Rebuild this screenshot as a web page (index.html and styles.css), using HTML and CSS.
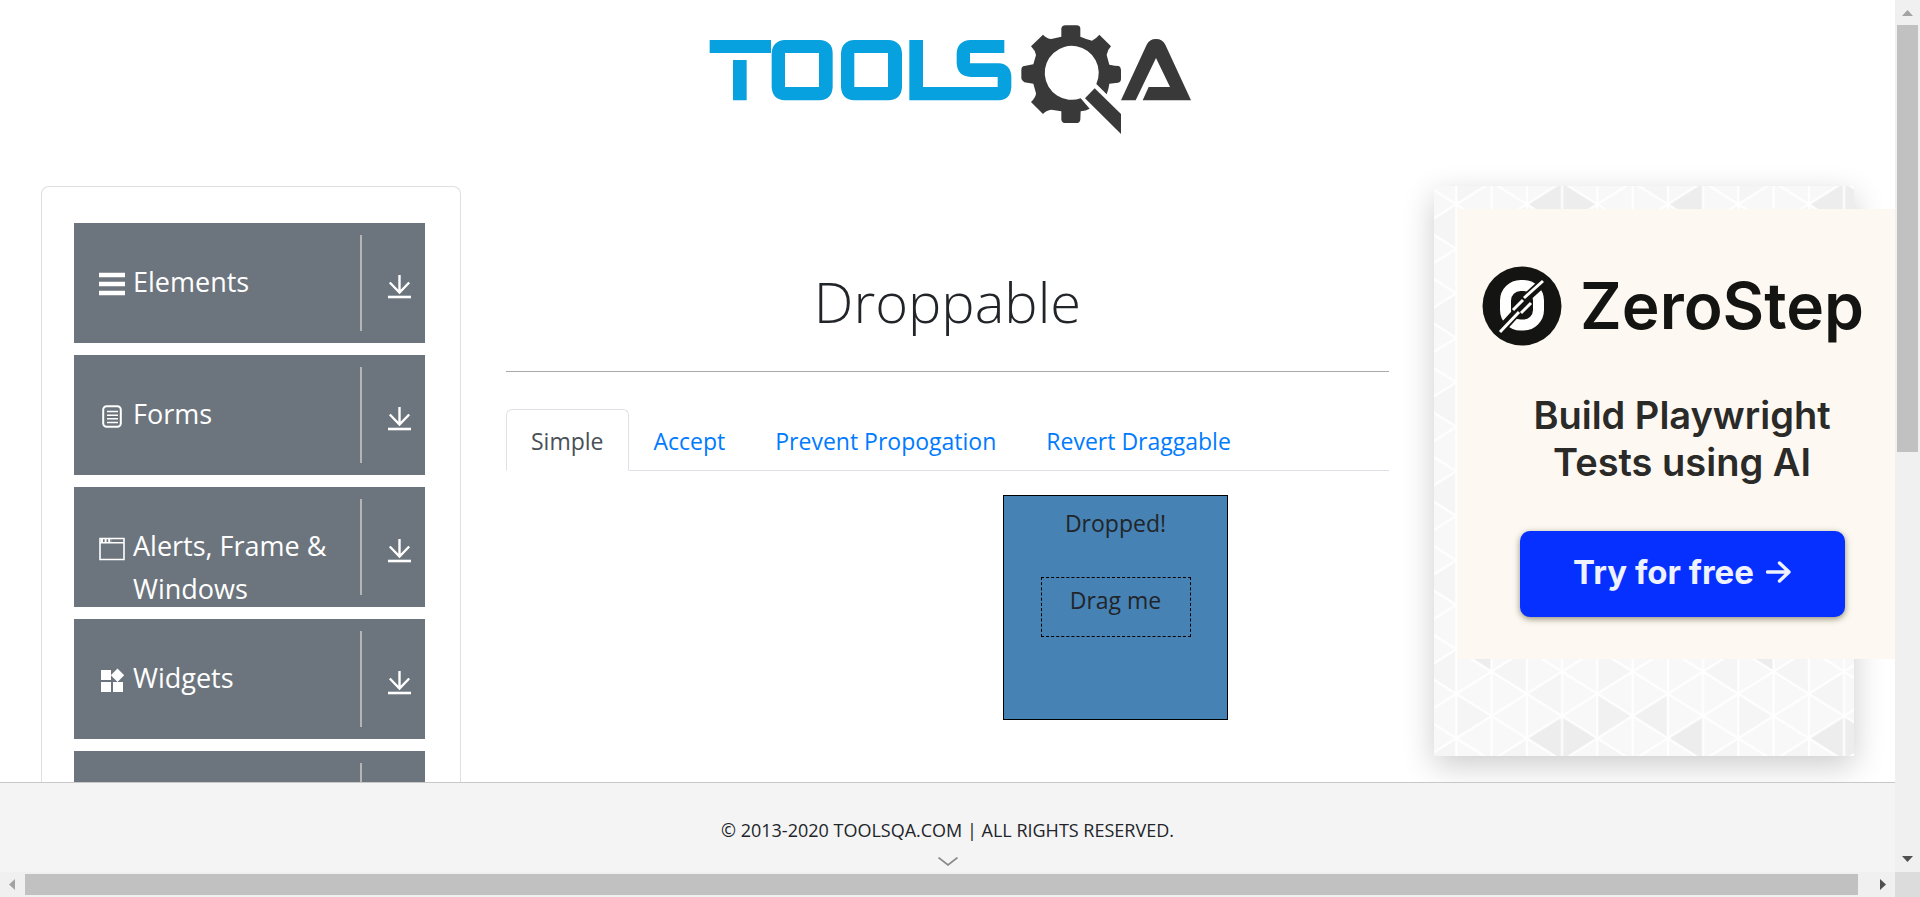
FILE: index.html
```html
<!DOCTYPE html>
<html lang="en">
<head>
<meta charset="utf-8">
<title>ToolsQA - Droppable</title>
<link rel="stylesheet" href="styles.css">
</head>
<body>
<svg class="defs" aria-hidden="true">
  <symbol id="download" viewBox="0 0 23 24"><path d="M11.5 0v17.5M1.8 7.5l9.7 10 9.7-10" fill="none" stroke="currentColor" stroke-width="2.4"/><path d="M0 22h23" stroke="currentColor" stroke-width="2.6"/></symbol>
</svg>
<div class="window">
  <div class="page">
    <header class="header">
      <a href="#" aria-label="ToolsQA">
        <svg class="logo" viewBox="-9 -30 1563 450" role="img" aria-label="ToolsQA">
          <g fill="#06a1de">
            <path d="M59 90H243V129H59zM129 150H170V271H129z"/>
            <path fill-rule="evenodd" d="M285 90H388Q428 92 428 130V231Q426 269 388 271H285Q247 269 245 231V130Q247 92 285 90zM285 129V231H387V129z"/>
            <path fill-rule="evenodd" d="M493 90H595Q634 92 636 130V231Q634 269 595 271H493Q455 269 453 231V130Q455 92 493 90zM493 129V231H594V129z"/>
            <path d="M658 90H699V231H923V201H842Q802 199 800 160V130Q802 92 842 90H943V129H840V160H926Q962 162 964 200V231Q962 269 926 271H658z"/>
          </g>
          <g fill="#393939">
            <path fill-rule="evenodd" d="M1114 55Q1116 46 1126 46H1160Q1170 46 1171 55V80Q1190 88 1206 92Q1218 86 1228 74L1263 109Q1252 120 1250 135L1258 164Q1276 168 1287 168Q1293 172 1293 180V207Q1293 216 1284 218L1258 221Q1256 238 1250 253L1219 222A81 81 0 1 0 1172 265L1199 296Q1188 303 1172 304L1171 329Q1169 339 1160 339H1126Q1116 339 1114 329V304L1084 299Q1070 300 1059 312L1023 276Q1038 262 1038 250L1030 221L1003 217Q994 212 994 205V179Q995 168 1003 168L1030 163L1038 135Q1036 122 1023 109L1059 74Q1070 86 1084 87L1114 80z"/>
            <path d="M1185 265L1214 235L1293 312V372z"/>
            <path d="M1293 271L1370 104Q1378 87 1398 87Q1418 87 1426 104L1503 271H1358L1376 231H1440L1398 144L1337 271z"/>
          </g>
        </svg>
      </a>
    </header>
    <div class="columns">
      <nav class="menu" aria-label="Sections">
        <button class="item" type="button">
          <svg class="icon" viewBox="0 0 26 26"><path d="M0 5h26M0 14h26M0 23h26" stroke="currentColor" stroke-width="4.4"/></svg>
          <span class="label">Elements</span>
          <span class="toggle"><svg class="arrow"><use href="#download"/></svg></span>
        </button>
        <button class="item" type="button">
          <svg class="icon" viewBox="0 0 26 26"><rect x="4.2" y="4.2" width="17.6" height="20.6" rx="3.5" fill="none" stroke="currentColor" stroke-width="2"/><path d="M8 9.5h11M8 13.2h11M8 16.8h11M8 20.5h11" stroke="currentColor" stroke-width="1.4"/></svg>
          <span class="label">Forms</span>
          <span class="toggle"><svg class="arrow"><use href="#download"/></svg></span>
        </button>
        <button class="item" type="button">
          <svg class="icon" viewBox="0 0 26 26"><path d="M1 4.5h24v21H1zM1 8.8h24" fill="none" stroke="currentColor" stroke-width="1.6"/><path d="M2 6.6h11" stroke="currentColor" stroke-width="3" stroke-dasharray="2 1.6"/></svg>
          <span class="label">Alerts, Frame &amp; Windows</span>
          <span class="toggle"><svg class="arrow"><use href="#download"/></svg></span>
        </button>
        <button class="item" type="button">
          <svg class="icon" viewBox="0 0 26 26"><path d="M2 4h10v10H2zM2 16h10v10H2zM14 16h10v10H14zM18.500 2.500l6.700 6.700-6.700 6.700-6.700-6.700z" fill="currentColor"/></svg>
          <span class="label">Widgets</span>
          <span class="toggle"><svg class="arrow"><use href="#download"/></svg></span>
        </button>
        <button class="item" type="button" aria-label="More">
          <span class="label"></span>
          <span class="toggle"></span>
        </button>
      </nav>
      <main class="main">
        <h1 class="title">Droppable</h1>
        <div class="tabs">
          <a class="tab active" href="#simple">Simple</a>
          <a class="tab" href="#accept">Accept</a>
          <a class="tab" href="#prevent">Prevent Propogation</a>
          <a class="tab" href="#revert">Revert Draggable</a>
        </div>
        <div class="drop">
          <p class="dropped">Dropped!</p>
          <div class="drag">Drag me</div>
        </div>
      </main>
      <aside class="ad">
        <svg class="pattern" viewBox="0 0 420 570" preserveAspectRatio="none" aria-hidden="true">
          <defs>
            <pattern id="mesh" x="22.3" y="18.3" width="70.5" height="44.5" patternUnits="userSpaceOnUse">
              <path d="M0 0V44.500M70.500 0V44.500M35.250 0V44.500M0 0L70.500 44.500M0 44.500L70.500 0" fill="none" stroke="#fff" stroke-width="2"/>
            </pattern>
            <pattern id="tint" x="22.3" y="18.3" width="282" height="89" patternUnits="userSpaceOnUse">
              <path d="M35.250 22.250L70.500 0V44.500zM141 0L176.250 22.250 141 44.500zM176.250 66.750L211.500 44.500V89zM0 44.500L35.250 66.750 0 89zM246.750 22.250L282 0V44.500zM70.500 44.500L105.750 66.750V22.250z" fill="#f5f5f5"/>
            </pattern>
          </defs>
          <rect width="420" height="570" fill="#f8f8f8"/>
          <rect width="420" height="570" fill="url(#tint)"/>
          <path d="M93 18L128-4V40zM163 18L128-4V40zM234 18L269-4V40zM375 18L410-4V40zM446 18L410-4V40zM93 552L128 530V575zM163 552L128 530V575zM234 552L269 530V575zM375 552L410 530V575zM446 552L410 530V575zM22 463L57 441V485zM304 463L339 441V485z" fill="#ededed"/>
          <path d="M163 508L198 530 163 552zM234 508L198 530 234 552z" fill="#f1f1f1"/>
          <rect width="420" height="570" fill="url(#mesh)"/>
        </svg>
        <div class="banner">
          <div class="brand">
            <svg class="mark" viewBox="0 0 80 80" aria-hidden="true">
              <circle cx="40" cy="40" r="39.500" fill="#141412"/>
              <rect x="23.500" y="19.500" width="33" height="39.500" rx="15" fill="none" stroke="#fff" stroke-width="11"/>
              <path d="M66 12L44 32M35 46L14 69" stroke="#141412" stroke-width="9"/>
              <path d="M61 15L42 32M18 66L37 46M31 44L41 34M39 47L49 37" stroke="#fff" stroke-width="3"/>
            </svg>
            <span>ZeroStep</span>
          </div>
          <p class="pitch">Build Playwright<br>Tests using AI</p>
          <button class="try" type="button">Try for free
            <svg class="go" viewBox="0 0 25 22" aria-hidden="true"><path d="M1.500 11H23M13.500 2l9.500 9-9.500 9" fill="none" stroke="currentColor" stroke-width="3.400" stroke-linecap="round" stroke-linejoin="round"/></svg>
          </button>
        </div>
      </aside>
    </div>
    <footer class="footer">
      <span>© 2013-2020 TOOLSQA.COM | ALL RIGHTS RESERVED.</span>
      <svg class="chevron" viewBox="0 0 20 9" aria-hidden="true"><path d="M.5.500L10 8l9.500-7.500" fill="none" stroke="#888" stroke-width="1.600"/></svg>
    </footer>
  </div>
  <div class="vbar" aria-hidden="true">
    <svg class="end" viewBox="0 0 25 25"><path d="M7 16h11l-5.500-6z" fill="#a3a3a3"/></svg>
    <div class="vtrack"><div class="vthumb"></div></div>
    <svg class="end" viewBox="0 0 25 25"><path d="M7 9h11l-5.500 6z" fill="#505050"/></svg>
  </div>
  <div class="hbar" aria-hidden="true">
    <svg class="end" viewBox="0 0 25 25"><path d="M15 7v11l-6-5.500z" fill="#a3a3a3"/></svg>
    <div class="hthumb"></div>
    <svg class="end" viewBox="0 0 25 25"><path d="M10 7v11l6-5.500z" fill="#505050"/></svg>
  </div>
  <div class="corner"></div>
</div>
</body>
</html>
```
FILE: styles.css
```css
* { box-sizing: border-box; }
body {
  margin: 0;
  background: #fff;
  color: #212529;
  font-family: "Open Sans", "Noto Sans", sans-serif;
  font-size: 23px;
}
svg { display: block; flex: none; }
button { font: inherit; border: 0; margin: 0; padding: 0; }
a { color: #007bff; text-decoration: none; }
p { margin: 0; }
.defs { position: absolute; width: 0; height: 0; }

.window {
  display: grid;
  grid-template-columns: minmax(0, 1fr) 25px;
  grid-template-rows: minmax(0, 1fr) 25px;
  height: 100vh;
}
.page {
  display: flex;
  flex-direction: column;
  overflow: hidden;
}
.header {
  display: flex;
  flex: none;
  justify-content: center;
  height: 186px;
}
.logo { width: 521px; height: 150px; }
.columns {
  display: grid;
  flex: 1;
  grid-template-columns: minmax(0, 420fr) minmax(0, 883fr) minmax(0, 420fr);
  gap: 45px;
  min-height: 0;
  padding: 0 41px;
}

.menu {
  display: flex;
  flex-direction: column;
  gap: 12px;
  min-height: 0;
  overflow: hidden;
  padding: 36px 35px 0 32px;
  border: 1px solid #dfdfdf;
  border-bottom: 0;
  border-radius: 8px 8px 0 0;
}
.item {
  display: flex;
  flex: none;
  align-items: flex-start;
  gap: 8px;
  height: 120px;
  padding: 12px 0 12px 25px;
  overflow: hidden;
  background: #6c757d;
  color: #fff;
  font-size: 27px;
  line-height: 43px;
  text-align: left;
}
.icon { width: 26px; height: 26px; margin-top: 35px; overflow: visible; }
.label { flex: 1; padding-top: 25px; }
.toggle {
  display: flex;
  align-items: center;
  justify-content: center;
  width: 65px;
  height: 96px;
  padding: 8px 0 0 12px;
  border-left: 2px solid #b5b5b5;
}
.arrow { width: 23px; height: 24px; }

.main { min-width: 0; }
.title {
  margin: 0 0 37px;
  padding: 73px 0 28px;
  border-bottom: 1px solid #aaa;
  font-size: 56px;
  font-weight: 300;
  line-height: 84px;
  text-align: center;
}
.tabs {
  display: flex;
  border-bottom: 1px solid #dee2e6;
}
.tab {
  margin-bottom: -1px;
  padding: 13px 24px 11px;
  border: 1px solid transparent;
  line-height: 36px;
}
.tab.active {
  border-color: #dee2e6 #dee2e6 #fff;
  border-radius: 6px 6px 0 0;
  background: #fff;
  color: #495057;
}
.drop {
  width: 225px;
  height: 225px;
  margin: 24px 161px 0 auto;
  padding-top: 8px;
  border: 1px solid #000;
  background: #4682b4;
  line-height: 38px;
  text-align: center;
}
.drag {
  width: 150px;
  height: 60px;
  margin: 35px auto 0;
  padding-top: 3px;
  border: 1px dashed #000;
}

.ad {
  position: relative;
  align-self: start;
  height: 570px;
  padding: 23px;
  box-shadow: 0 10px 30px rgba(0, 0, 0, 0.2);
}
.pattern {
  position: absolute;
  inset: 0;
  width: 100%;
  height: 100%;
}
.banner {
  position: relative;
  display: flex;
  flex-direction: column;
  align-items: center;
  width: 450px;
  height: 450px;
  padding-top: 57px;
  background: #fdf8f1;
  color: #141412;
  font-family: Inter, sans-serif;
}
.brand {
  display: flex;
  align-items: center;
  gap: 18px;
  padding-right: 18px;
  font-size: 64px;
  font-weight: 600;
  line-height: 80px;
}
.mark { width: 80px; height: 80px; }
.pitch {
  margin-top: 46px;
  color: #2a2a28;
  font-size: 38px;
  font-weight: 600;
  line-height: 47px;
  text-align: center;
}
.try {
  display: flex;
  align-items: center;
  justify-content: center;
  gap: 12px;
  width: 325px;
  height: 86px;
  margin-top: 45px;
  padding-bottom: 4px;
  border-radius: 10px;
  background: #0530ff;
  box-shadow: 0 2px 6px rgba(40, 40, 0, 0.5);
  color: #eef2ff;
  font-size: 33px;
  font-weight: 700;
}
.go { width: 25px; height: 22px; }

.footer {
  position: relative;
  display: flex;
  flex: none;
  flex-direction: column;
  align-items: center;
  gap: 14px;
  height: 90px;
  padding-top: 34px;
  border-top: 1px solid #c8c8c8;
  background: #f4f4f4;
  font-size: 18px;
  line-height: 26px;
}
.chevron { width: 20px; height: 9px; }

.vbar, .hbar { display: flex; background: #f0f0f0; }
.vbar { flex-direction: column; }
.end { width: 25px; height: 25px; }
.vtrack { flex: 1; padding: 0 2px; }
.vthumb { height: 52%; background: #c1c1c1; }
.hthumb { flex: 1; margin: 2px 12px 2px 0; background: #c1c1c1; }
.corner { background: #dcdcdc; }
```
